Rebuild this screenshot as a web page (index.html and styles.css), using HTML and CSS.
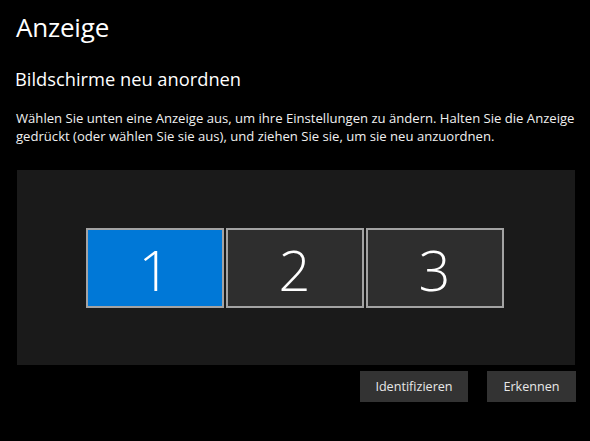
FILE: index.html
```html
<!DOCTYPE html>
<html lang="de">
<head>
<meta charset="utf-8">
<link rel="stylesheet" href="styles.css">
</head>
<body>
<div class="page">
  <h1 class="title">Anzeige</h1>
  <h2 class="subtitle">Bildschirme neu anordnen</h2>
  <p class="desc">Wählen Sie unten eine Anzeige aus, um ihre Einstellungen zu ändern. Halten Sie die Anzeige gedrückt (oder wählen Sie sie aus), und ziehen Sie sie, um sie neu anzuordnen.</p>
  <div class="panel">
    <div class="monitors">
      <div class="monitor active">1</div>
      <div class="monitor">2</div>
      <div class="monitor">3</div>
    </div>
  </div>
  <div class="actions">
    <button class="btn btn-id">Identifizieren</button>
    <button class="btn btn-detect">Erkennen</button>
  </div>
</div>
</body>
</html>
```
FILE: styles.css
```css
html, body {
  margin: 0;
  background: #000;
}
body {
  width: 590px;
  height: 441px;
  overflow: hidden;
  font-family: "Open Sans", "Noto Sans", "Liberation Sans", sans-serif;
  color: #fff;
}
.page {
  padding: 0 0 0 16px;
}
.title {
  margin: 0;
  padding-top: 9px;
  font-size: 26px;
  font-weight: 400;
  line-height: 36px;
  letter-spacing: -0.2px;
}
.subtitle {
  margin: 0;
  padding-top: 21px;
  margin-left: -1px;
  font-size: 18.3px;
  font-weight: 400;
  line-height: 25px;
}
.desc {
  margin: 0;
  padding-top: 18px;
  width: 570px;
  font-size: 13.1px;
  line-height: 18px;
  color: #f0f0f0;
}
.panel {
  margin: 25px 0 0 1px;
  width: 558px;
  height: 195px;
  background: #1a1a1a;
  display: flex;
  align-items: center;
  justify-content: center;
}
.monitors {
  display: flex;
  gap: 2px;
  margin-left: -3px;
}
.monitor {
  box-sizing: border-box;
  width: 138px;
  height: 80px;
  border: 2px solid #a3a3a3;
  background: #2e2e2e;
  display: flex;
  align-items: center;
  justify-content: center;
  font-size: 56px;
  font-weight: 300;
  color: #fff;
  line-height: 1;
  padding-top: 2px;
}
.monitor.active {
  background: #0078d7;
}
.actions {
  display: flex;
  justify-content: flex-end;
  gap: 19px;
  width: 560px;
  margin-top: 6px;
}
.btn {
  font-family: inherit;
  height: 31px;
  border: none;
  background: #333;
  color: #e8e8e8;
  font-size: 12.6px;
  padding: 0;
}
.btn-id { width: 108px; }
.btn-detect { width: 89px; }
```
